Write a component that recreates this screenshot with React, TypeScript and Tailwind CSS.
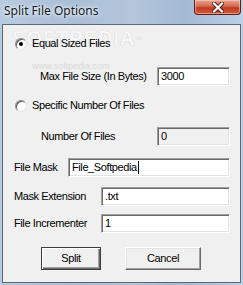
import React from "react";

const sans = "font-['Liberation_Sans',Arial,sans-serif]";

const sunken =
  "h-[19px] border border-t-[#a0a0a0] border-l-[#a0a0a0] border-b-white border-r-white shadow-[inset_1px_1px_0_#696969,inset_-1px_-1px_0_#e3e3e3] pl-[3px] flex items-center text-[11px] tracking-[-0.4px] text-black";

const Radio = ({ checked, label }: { checked?: boolean; label: string }) => (
  <div className="flex h-[13px] items-center pl-[12px]">
    <div className="flex h-[12px] w-[12px] items-center justify-center rounded-full border border-t-[#8a8a8a] border-l-[#8a8a8a] border-b-[#e6e6e6] border-r-[#e6e6e6] bg-white shadow-[inset_1px_1px_0_#5a5a5a]">
      {checked && <div className="h-[4px] w-[4px] rounded-full bg-black" />}
    </div>
    <span className="ml-[5px] text-[11px] leading-none tracking-[-0.4px] text-black">{label}</span>
  </div>
);

const Field = ({
  label,
  labelClass,
  inputClass,
  value,
  disabled,
  caret,
}: {
  label: string;
  labelClass: string;
  inputClass: string;
  value: string;
  disabled?: boolean;
  caret?: boolean;
}) => (
  <div className="flex items-center">
    <span className={`${labelClass} text-[11px] leading-none tracking-[-0.4px] text-black`}>{label}</span>
    <div className={`${sunken} ${inputClass} ${disabled ? "bg-[#f0f0f0] text-[#8c8c8c]" : "bg-white"}`}>
      {value}
      {caret && <span className="ml-[1px] h-[13px] w-[1px] bg-black" />}
    </div>
  </div>
);

export default function App() {
  return (
    <div
      className={`${sans} relative h-[285px] w-[243px] overflow-hidden bg-[linear-gradient(90deg,#b7cbe0_0%,#a9bed6_30%,#b3c6db_55%,#a4bad3_75%,#bcd0e6_100%)]`}
    >
      {/* title bar */}
      <div className="flex h-[24px] items-start justify-between">
        <span className="ml-[4px] mt-[3px] font-['Noto_Sans',sans-serif] text-[12px] leading-[16px] text-[#141a24] [text-shadow:0_0_6px_#ffffff,0_0_3px_#ffffff]">
          Split File Options
        </span>
        <div className="mr-[2px] flex h-[15px] w-[47px] items-center justify-center rounded-b-[4px] border border-t-0 border-[#5a1f14] bg-[linear-gradient(180deg,#e9a48f_0%,#d3694f_45%,#c13b1f_55%,#d45a3a_100%)] shadow-[inset_0_0_0_1px_rgba(255,220,210,0.5)]">
          <svg width="12" height="11" viewBox="0 0 12 11">
            <path d="M2 1.5L10 9.5M10 1.5L2 9.5" stroke="#4a1a10" strokeWidth="4" strokeLinecap="square" />
            <path d="M2 1.5L10 9.5M10 1.5L2 9.5" stroke="#ffffff" strokeWidth="2.2" strokeLinecap="square" />
          </svg>
        </div>
      </div>

      {/* client area */}
      <div className="relative ml-[2px] h-[259px] w-[239px] border border-[#5f6670] bg-[#f0f0f0]">
        {/* watermark */}
        <span className="pointer-events-none absolute left-[9px] top-[1px] text-[20px] font-bold leading-[24px] tracking-[1px] text-[#f6f6f6] [text-shadow:0_0_1px_#c4c4c4]">
          SOFTPEDIA<sup className="text-[7px] font-normal">™</sup>
        </span>
        <span className="pointer-events-none absolute left-[29px] top-[36px] text-[9px] leading-[10px] text-[#d9d9d9]">
          www.softpedia.com
        </span>

        <div className="relative flex flex-col">
          <div className="mt-[12px]">
            <Radio checked label="Equal Sized Files" />
          </div>
          <div className="mt-[17px]">
            <Field
              label="Max File Size (In Bytes)"
              labelClass="ml-[37px] w-[117px]"
              inputClass="w-[73px]"
              value="3000"
            />
          </div>
          <div className="mt-[13px]">
            <Radio label="Specific Number Of Files" />
          </div>
          <div className="mt-[15px]">
            <Field
              label="Number Of Files"
              labelClass="ml-[38px] w-[116px]"
              inputClass="w-[73px]"
              value="0"
              disabled
            />
          </div>
          <div className="mt-[12px]">
            <Field
              label="File Mask"
              labelClass="ml-[11px] w-[54px]"
              inputClass="w-[162px]"
              value="File_Softpedia"
              caret
            />
          </div>
          <div className="mt-[10px]">
            <Field
              label="Mask Extension"
              labelClass="ml-[11px] w-[87px]"
              inputClass="w-[129px]"
              value=".txt"
            />
          </div>
          <div className="mt-[8px]">
            <Field
              label="File Incrementer"
              labelClass="ml-[11px] w-[87px]"
              inputClass="w-[129px]"
              value="1"
            />
          </div>

          <div className="mt-[14px] flex">
            <button className="ml-[38px] flex h-[23px] w-[60px] items-center justify-center border border-[#3c3c3c] bg-[#f0f0f0] text-[11px] tracking-[-0.4px] text-black shadow-[inset_1px_1px_0_#ffffff,inset_-1px_-1px_0_#696969,inset_-2px_-2px_0_#a0a0a0]">
              Split
            </button>
            <button className="ml-[24px] flex h-[23px] w-[76px] items-center justify-center border border-t-white border-l-white border-b-[#696969] border-r-[#696969] bg-[#f0f0f0] text-[11px] tracking-[-0.4px] text-black shadow-[inset_-1px_-1px_0_#a0a0a0,inset_1px_1px_0_#e3e3e3]">
              Cancel
            </button>
          </div>
        </div>
      </div>
    </div>
  );
}
